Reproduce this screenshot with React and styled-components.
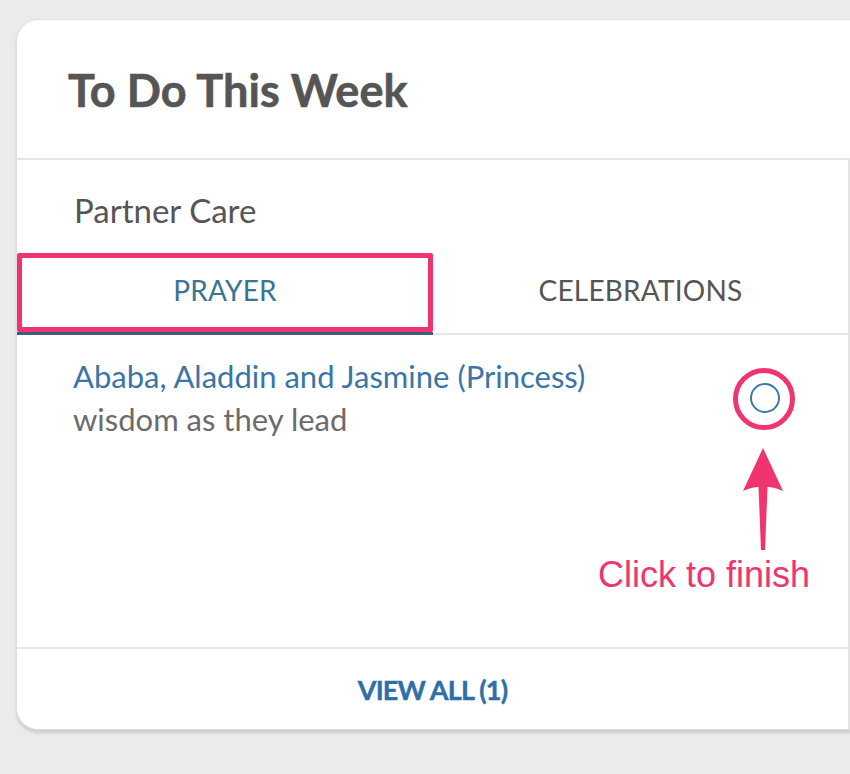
import React, { useState } from 'react';
import styled, { createGlobalStyle } from 'styled-components';

const GlobalStyle = createGlobalStyle`
  html, body {
    margin: 0;
    padding: 0;
    background: #ebebeb;
    overflow: hidden;
  }
  body {
    font-family: Lato, 'Open Sans', sans-serif;
  }
`;

const PINK = '#f0346f';

const Page = styled.div`
  position: relative;
  width: 850px;
  height: 774px;
  padding: 19px 0 0 16px;
  box-sizing: border-box;
`;

const Card = styled.div`
  width: 850px;
  background: #fff;
  border: 1px solid #dedede;
  border-right: none;
  border-radius: 22px 0 0 22px;
  box-shadow: 0 3px 3px rgba(0, 0, 0, 0.12);
  overflow: hidden;
`;

const Header = styled.div`
  height: 140px;
  display: flex;
  align-items: center;
  padding: 0 51px;
  border-bottom: 2px solid #e6e6e6;
  box-sizing: border-box;
`;

const Title = styled.h2`
  margin: 0;
  font-size: 45px;
  font-weight: 700;
  color: #555;
  letter-spacing: 0.1px;
  padding-top: 2px;
  -webkit-text-stroke: 0.6px #555;
`;

const Body = styled.div`
  width: 831px;
  border-right: 2px solid #e3e3e3;
`;

const Section = styled.div`
  height: 93px;
  display: flex;
  align-items: center;
  padding: 6px 57px 0;
  box-sizing: border-box;
  font-size: 33px;
  color: #555;
`;

const Tabs = styled.div`
  display: grid;
  grid-template-columns: 416px 1fr;
  border-bottom: 2px solid #e6e6e6;
`;

const Tab = styled.button`
  height: 82px;
  border: none;
  background: none;
  font-family: inherit;
  font-size: 28px;
  letter-spacing: 0.2px;
  color: ${p => (p.$active ? '#3a7495' : '#555')};
  box-shadow: ${p => (p.$active ? 'inset 0 -3px 0 #3d5e7e' : 'none')};
  margin-bottom: -2px;
  padding: 0 0 8px;
  cursor: pointer;
`;

const ItemList = styled.div`
  height: 314px;
  padding: 22px 56px 0 56px;
  box-sizing: border-box;
  border-bottom: 2px solid #e6e6e6;
`;

const Item = styled.div`
  display: flex;
  align-items: flex-start;
  justify-content: space-between;
`;

const ItemText = styled.div`
  display: flex;
  flex-direction: column;
  gap: 5px;
`;

const ItemName = styled.a`
  font-size: 31px;
  color: #3a75a7;
  text-decoration: none;
  line-height: 38px;
`;

const ItemNote = styled.span`
  font-size: 31px;
  color: #6b6b6b;
  line-height: 38px;
`;

const Check = styled.button`
  width: 30px;
  height: 30px;
  border-radius: 50%;
  border: 2px solid #3c78a8;
  background: #fff;
  margin: 26px 12px 0 0;
  padding: 0;
  cursor: pointer;
`;

const Footer = styled.div`
  height: 80px;
  display: flex;
  align-items: center;
  justify-content: center;
`;

const ViewAll = styled.a`
  font-size: 27px;
  font-weight: 700;
  color: #2f6ea6;
  letter-spacing: -0.8px;
  text-decoration: none;
  -webkit-text-stroke: 0.4px #2f6ea6;
`;

const HighlightBox = styled.div`
  position: absolute;
  left: 17px;
  top: 253px;
  width: 416px;
  height: 79px;
  border: 5px solid ${PINK};
  border-radius: 2px;
  box-sizing: border-box;
  pointer-events: none;
`;

const HighlightRing = styled.div`
  position: absolute;
  left: 733px;
  top: 368px;
  width: 62px;
  height: 62px;
  border: 5px solid ${PINK};
  border-radius: 50%;
  box-sizing: border-box;
  pointer-events: none;
`;

const Arrow = styled.svg`
  position: absolute;
  left: 740px;
  top: 446px;
  width: 46px;
  height: 106px;
`;

const Note = styled.div`
  position: absolute;
  left: 598px;
  top: 555px;
  font-family: 'Liberation Sans', Arial, sans-serif;
  font-size: 36px;
  color: ${PINK};
  line-height: 40px;
  white-space: nowrap;
`;

export default function App() {
  const [tab, setTab] = useState('prayer');

  return (
    <Page>
      <GlobalStyle />
      <Card>
        <Header>
          <Title>To Do This Week</Title>
        </Header>
        <Body>
          <Section>Partner Care</Section>
          <Tabs>
            <Tab $active={tab === 'prayer'} onClick={() => setTab('prayer')}>
              PRAYER
            </Tab>
            <Tab $active={tab === 'celebrations'} onClick={() => setTab('celebrations')}>
              CELEBRATIONS
            </Tab>
          </Tabs>
          <ItemList>
            <Item>
              <ItemText>
                <ItemName href="#">Ababa, Aladdin and Jasmine (Princess)</ItemName>
                <ItemNote>wisdom as they lead</ItemNote>
              </ItemText>
              <Check aria-label="Mark finished" />
            </Item>
          </ItemList>
          <Footer>
            <ViewAll href="#">VIEW ALL (1)</ViewAll>
          </Footer>
        </Body>
      </Card>

      {/* annotations */}
      <HighlightBox />
      <HighlightRing />
      <Arrow viewBox="0 0 46 106">
        <path
          d="M23 2 L43 45 Q34 41 27.5 41 L25 104 L21 104 L18.5 41 Q12 41 3 45 Z"
          fill={PINK}
        />
      </Arrow>
      <Note>Click to finish</Note>
    </Page>
  );
}
